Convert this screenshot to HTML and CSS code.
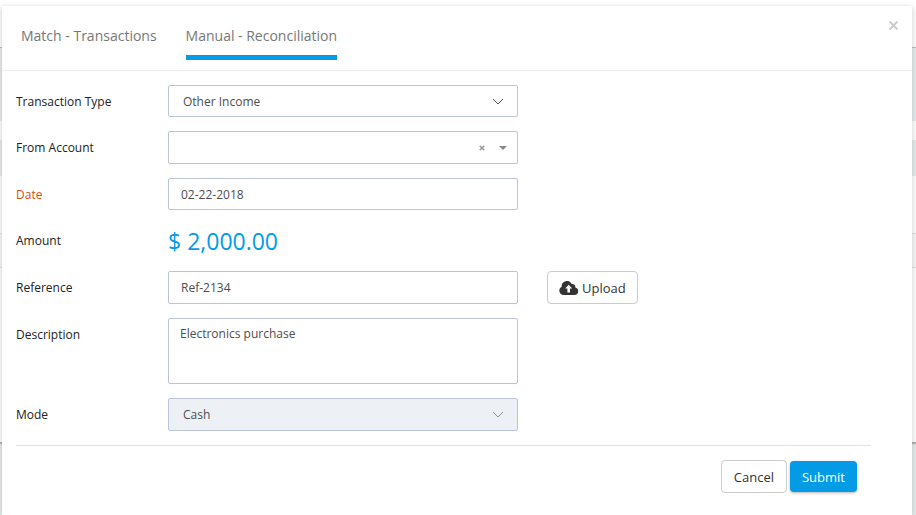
FILE: index.html
```html
<!DOCTYPE html>
<html lang="en">
  <head>
    <meta charset="UTF-8" />
    <meta name="viewport" content="width=device-width, initial-scale=1.0" />
    <title>Manual - Reconciliation</title>
    <link rel="stylesheet" href="styles.css">
  </head>
  <body>
    <div class="modal" role="dialog" aria-label="Reconciliation">
      <header class="modal-header">
        <nav class="tabs">
          <a href="#match" class="tab">Match - Transactions</a>
          <a href="#manual" class="tab active">Manual - Reconciliation</a>
        </nav>
        <button type="button" class="close" aria-label="Close">
          <svg width="9" height="9" viewBox="0 0 9 9">
            <path d="M0.5 0.5 L8.5 8.5 M8.5 0.5 L0.5 8.5" />
          </svg>
        </button>
      </header>

      <form class="modal-body">
        <div class="row">
          <label for="type">Transaction Type</label>
          <div class="field">
            <select id="type" class="control short">
              <option>Other Income</option>
            </select>
            <svg class="chevron" width="12" height="7" viewBox="0 0 12 7">
              <path d="M1 1 L6 6 L11 1" />
            </svg>
          </div>
        </div>

        <div class="row">
          <label for="account">From Account</label>
          <div class="field combo control">
            <input id="account" type="text" class="combo-input" />
            <button type="button" class="combo-button" aria-label="Clear">
              <svg width="6" height="6" viewBox="0 0 6 6">
                <path class="clear" d="M0.7 0.7 L5.3 5.3 M5.3 0.7 L0.7 5.3" />
              </svg>
            </button>
            <button type="button" class="combo-button" aria-label="Open list">
              <svg width="8" height="4" viewBox="0 0 8 4">
                <path class="caret" d="M0 0 H8 L4 4 Z" />
              </svg>
            </button>
          </div>
        </div>

        <div class="row">
          <label for="date" class="required">Date</label>
          <div class="field">
            <input id="date" type="text" class="control short" value="02-22-2018" />
          </div>
        </div>

        <div class="row">
          <span class="label">Amount</span>
          <output class="amount">$ 2,000.00</output>
        </div>

        <div class="row">
          <label for="reference">Reference</label>
          <div class="field">
            <input id="reference" type="text" class="control" value="Ref-2134" />
          </div>
          <button type="button" class="btn upload">
            <svg width="20" height="14" viewBox="0 0 20 14">
              <path
                class="cloud"
                d="M4.6 14 A4.4 4.4 0 0 1 2.7 5.7 A5.2 5.2 0 0 1 12.6 3 A3 3 0 0 1 16.3 6.4 A3.9 3.9 0 0 1 16 14 Z"
              />
              <path class="arrow" d="M9.7 3.8 L13.2 7.6 H11 V11.5 H8.4 V7.6 H6.2 Z" />
            </svg>
            Upload
          </button>
        </div>

        <div class="row">
          <label for="description">Description</label>
          <div class="field">
            <textarea id="description" class="control">Electronics purchase</textarea>
          </div>
        </div>

        <div class="row">
          <label for="mode">Mode</label>
          <div class="field">
            <select id="mode" class="control" disabled>
              <option>Cash</option>
            </select>
            <svg class="chevron muted" width="12" height="7" viewBox="0 0 12 7">
              <path d="M1 1 L6 6 L11 1" />
            </svg>
          </div>
        </div>

        <div class="actions">
          <button type="button" class="btn">Cancel</button>
          <button type="submit" class="btn primary">Submit</button>
        </div>
      </form>
    </div>
  </body>
</html>
```
FILE: styles.css
```css
* {
  box-sizing: border-box;
}

/* the greyed out page behind the modal */
body {
  margin: 0;
  min-height: 100vh;
  padding: 6px 4px 0 2px;
  display: flex;
  overflow: hidden;
  font-family: "Open Sans", sans-serif;
  font-size: 12px;
  color: #222;
  background: linear-gradient(
    #fff 6px,
    #f6f6f6 12px,
    #f6f6f6 47px,
    #b4b8b8 47px,
    #b4b8b8 48px,
    #dfe5e4 48px,
    #dfe5e4 121px,
    #f6f6f6 121px,
    #f6f6f6 140px,
    #dfe5e4 140px,
    #dfe5e4 176px,
    #f6f6f6 176px,
    #f6f6f6 233px,
    #dadada 233px,
    #dadada 234px,
    #f0f0f0 234px,
    #f0f0f0 267px,
    #dadada 267px,
    #dadada 268px,
    #f6f6f6 268px,
    #f6f6f6 442px,
    #a4a8a8 442px,
    #a4a8a8 443px,
    #dfe5e4 445px
  );
}

.modal {
  flex: 1;
  background: #fff;
  box-shadow: 0 0 4px rgba(0, 0, 0, 0.14);
}

.modal-header {
  display: flex;
  justify-content: space-between;
  align-items: flex-start;
  height: 65px;
  padding: 15px 14px 0 19px;
  border-bottom: 1px solid #ececec;
}

.tabs {
  display: flex;
  gap: 29px;
}

.tab {
  height: 39px;
  line-height: 30px;
  font-size: 14px;
  color: #777;
  text-decoration: none;
}

.active {
  border-bottom: 5px solid #039be5;
}

.close {
  display: flex;
  padding: 0;
  border: 0;
  background: none;
}

.close path {
  stroke: #ccc;
  stroke-width: 2;
}

.modal-body {
  padding: 14px 41px 0 14px;
}

.row {
  display: grid;
  grid-template-columns: 152px 350px auto;
  justify-content: start;
  margin-bottom: 14px;
}

label,
.label {
  padding-top: 2px;
  line-height: 30px;
}

.required {
  color: #d9500b;
}

.field {
  position: relative;
  display: flex;
}

.control {
  width: 100%;
  height: 33px;
  padding: 0 12px;
  border: 1px solid #bcc5d6;
  border-radius: 2px;
  background: #fff;
  font: inherit;
  color: #4d4d4d;
}

.short {
  height: 32px;
}

select.control {
  appearance: none;
  padding: 0 14px;
  opacity: 1;
}

select:disabled {
  background: #edf1f6;
}

textarea.control {
  height: 66px;
  padding: 6px 11px;
  line-height: 18px;
  resize: none;
}

.chevron {
  position: absolute;
  right: 14px;
  top: 13px;
  pointer-events: none;
}

.chevron path {
  fill: none;
  stroke: #555;
}

.muted path {
  stroke: #8a8f96;
}

.combo {
  align-items: center;
  padding: 0 10px 0 12px;
  gap: 14px;
}

.combo-input {
  flex: 1;
  border: 0;
  background: none;
  font: inherit;
}

.combo-button {
  display: flex;
  padding: 0;
  border: 0;
  background: none;
}

.clear {
  stroke: #999;
  stroke-width: 1.5;
}

.caret {
  fill: #888;
}

.amount {
  height: 33px;
  line-height: 35px;
  font-size: 23px;
  color: #039be5;
}

.btn {
  height: 33px;
  padding: 0 12px;
  border: 1px solid #ccc;
  border-radius: 4px;
  background: #fff;
  font: inherit;
  font-size: 13px;
  color: #333;
}

.upload {
  display: flex;
  align-items: center;
  gap: 3px;
  padding: 0 11px;
  margin-left: 29px;
}

.cloud {
  fill: #333;
}

.arrow {
  fill: #fff;
}

.actions {
  display: flex;
  justify-content: flex-end;
  align-items: center;
  gap: 3px;
  padding: 14px 14px 22px 0;
  border-top: 1px solid #e2e2e2;
}

.primary {
  height: 31px;
  border: 0;
  background: #039be5;
  color: #fff;
  box-shadow: 0 1px 3px rgba(0, 0, 0, 0.3);
}
```
